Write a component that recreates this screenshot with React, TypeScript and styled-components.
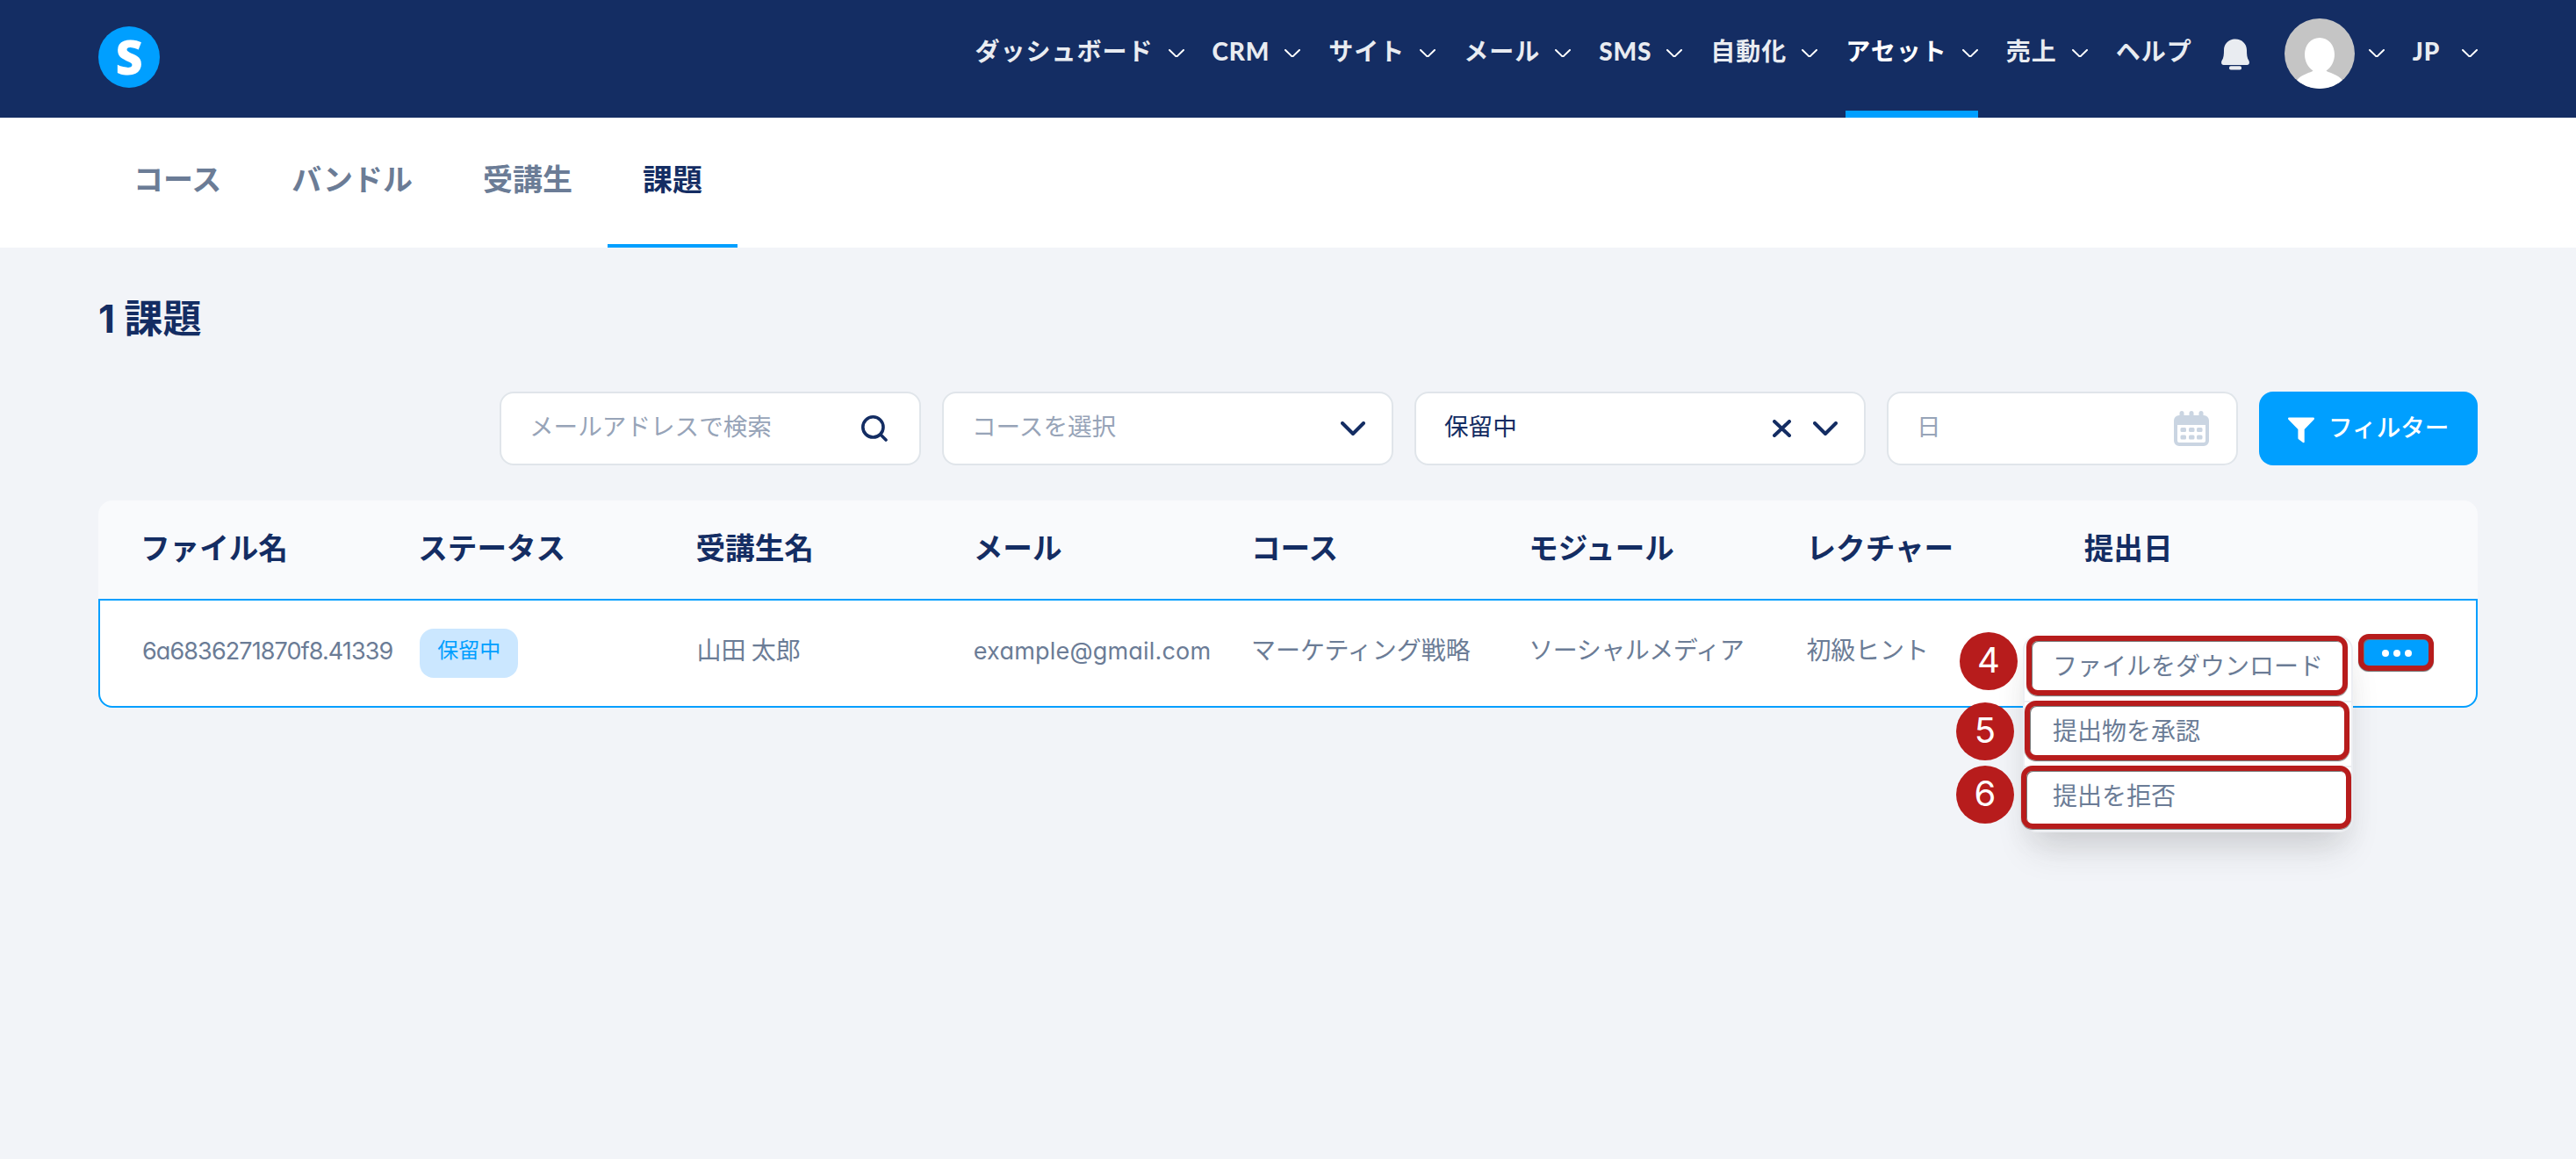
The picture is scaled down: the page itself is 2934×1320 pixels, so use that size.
import React from "react";
import styled, { createGlobalStyle, css } from "styled-components";

const NAVY = "#142d63";
const BLUE = "#009fff";
const SLATE = "#6b7c96";
const RED = "#b71c1c";
const JP = `"Noto Sans CJK JP", sans-serif`;

const GlobalStyle = createGlobalStyle`
  *, *::before, *::after { box-sizing: border-box; }
  body {
    margin: 0;
    background: #f2f4f8;
    color: ${SLATE};
    font-family: Inter, ${JP};
    font-size: 28px;
    line-height: 40px;
  }
  svg { display: block; flex: none; }
`;

const Page = styled.div`
  display: flex;
  flex-direction: column;
  min-height: 1320px;
  overflow: hidden;
`;

/* ---------- header ---------- */

const Header = styled.header`
  display: flex;
  justify-content: space-between;
  height: 134px;
  padding: 0 112px;
  background: ${NAVY};
`;

const Logo = styled.div`
  display: flex;
  align-items: center;
  justify-content: center;
  width: 70px;
  height: 70px;
  margin-top: 30px;
  padding-bottom: 3px;
  border-radius: 50%;
  background: ${BLUE};
  color: #fff;
  font: 800 54px/70px "Open Sans", sans-serif;
`;

const Nav = styled.nav`
  display: flex;
  color: #e9ecf1;
  font-family: Lato, ${JP};
  font-weight: 700;
`;

const NavItem = styled.div<{ $active?: boolean; $gap?: number }>`
  display: flex;
  align-items: flex-start;
  gap: ${(p) => p.$gap ?? 17}px;
  height: 134px;
  margin-left: 32px;
  ${(p) => p.$active && css`color: #fff; border-bottom: 8px solid ${BLUE};`}
  svg { margin-top: 56px; color: #fff; }
`;

const NavLabel = styled.span<{ $latin?: boolean }>`
  padding-top: 38px;
  font-weight: ${(p) => (p.$latin ? 900 : 700)};
  letter-spacing: ${(p) => (p.$latin ? 0.8 : 1)}px;
  white-space: nowrap;
`;

const BellWrap = styled.div`
  display: flex;
  margin: 44px 40px 0 33px;
`;

const Account = styled.div`
  display: flex;
  align-items: flex-start;
  gap: 16px;
  > svg { margin-top: 56px; color: #fff; }
`;

const AvatarFrame = styled.div`
  width: 80px;
  height: 80px;
  margin-top: 21px;
  border-radius: 50%;
  overflow: hidden;
  background: #c5c5c5;
`;

/* ---------- tabs ---------- */

const TabBar = styled.div`
  display: flex;
  height: 148px;
  padding: 0 112px;
  background: #fff;
`;

const Tab = styled.div<{ $active?: boolean }>`
  padding: 45px 40px 0;
  border-bottom: 4px solid ${(p) => (p.$active ? BLUE : "transparent")};
  color: ${(p) => (p.$active ? NAVY : SLATE)};
  font: 700 34px/48px ${JP};
`;

/* ---------- content ---------- */

const Content = styled.main`
  display: flex;
  flex-direction: column;
  padding: 0 112px;
`;

const Title = styled.h1`
  margin: 51px 0 0;
  color: ${NAVY};
  font: 700 44px/60px Inter, ${JP};
`;

const Filters = styled.div`
  display: flex;
  justify-content: flex-end;
  gap: 24px;
  margin-top: 53px;
`;

const Field = styled.div<{ $width: number; $end: number; $filled?: boolean }>`
  display: flex;
  align-items: center;
  width: ${(p) => p.$width}px;
  height: 84px;
  padding: 0 ${(p) => p.$end}px 0 32px;
  border: 2px solid #e0e5ea;
  border-radius: 16px;
  background: #fff;
  color: ${(p) => (p.$filled ? NAVY : "#97a4b8")};
`;

const FieldText = styled.span`
  flex: 1;
  padding-bottom: 9px;
  font: 400 27.6px/40px ${JP};
  white-space: nowrap;
`;

const FieldIcons = styled.div`
  display: flex;
  align-items: center;
  gap: 25px;
  color: ${NAVY};
`;

const FilterButton = styled.button`
  display: flex;
  align-items: center;
  gap: 16px;
  width: 249px;
  height: 84px;
  padding: 0 0 0 33px;
  border: 0;
  border-radius: 16px;
  background: ${BLUE};
  color: #fff;
  font: 500 27.6px/40px ${JP};
  svg { margin-top: 3px; }
  span { padding-bottom: 6px; white-space: nowrap; }
`;

/* ---------- table ---------- */

const Table = styled.section`
  display: flex;
  flex-direction: column;
  margin-top: 40px;
`;

const columns = css`
  display: grid;
  grid-template-columns: repeat(8, 316.25px) 1fr;
  align-items: center;
`;

const HeadRow = styled.div`
  ${columns}
  height: 112px;
  padding: 0 48px 6px;
  border-radius: 16px 16px 0 0;
  background: #f9fafc;
  color: ${NAVY};
  font: 700 33.6px/48px ${JP};
`;

const BodyRow = styled.div`
  ${columns}
  height: 124px;
  padding: 0 46px;
  border: 2px solid ${BLUE};
  border-radius: 0 0 16px 16px;
  background: #fff;
`;

const Cell = styled.div<{ $indent?: number; $spacing?: number }>`
  padding: 0 0 10px ${(p) => p.$indent ?? 0}px;
  white-space: nowrap;
  font-family: ${JP};
  letter-spacing: ${(p) => p.$spacing ?? 0}px;
`;

const LatinCell = styled(Cell)`
  padding-bottom: 4px;
  font: 400 27px/40px Inter, sans-serif;
  font-feature-settings: "cv11";
`;

const Status = styled.span`
  display: block;
  width: 112px;
  height: 56px;
  margin-left: 2px;
  padding-top: 3px;
  border-radius: 16px;
  background: #cbe7ff;
  color: ${BLUE};
  font: 400 24px/40px ${JP};
  text-align: center;
`;

const ActionCell = styled.div`
  position: relative;
  align-self: stretch;
`;

const MoreButton = styled.div`
  position: absolute;
  top: 38px;
  left: -4px;
  display: flex;
  align-items: center;
  justify-content: center;
  gap: 5px;
  width: 86px;
  height: 42px;
  padding: 2px 0 0 2px;
  border: 6px solid ${RED};
  border-radius: 12px;
  background: ${BLUE};
  box-shadow: 0 1px 1px #6e6e6e, inset 1px 1px 0 #6c7780;
`;

const Dot = styled.i`
  width: 8px;
  height: 8px;
  border-radius: 50%;
  background: #fff;
`;

const Menu = styled.div`
  position: absolute;
  top: 40px;
  right: 94px;
  width: 376px;
  border: 2px solid #eceef2;
  border-radius: 16px;
  background: #fff;
  box-shadow: 0 28px 40px -12px rgba(50, 50, 50, 0.17), 0 14px 30px rgba(50, 50, 50, 0.04);
`;

const MenuItem = styled.div`
  position: relative;
  height: 74px;
  padding: 11px 32px 0;
  border-bottom: 2px solid #eceef2;
  font-family: ${JP};
  white-space: nowrap;
  &:last-child { height: 72px; border-bottom: 0; }
`;

const Outline = styled.span<{ $l: number; $t: number; $w: number; $h: number }>`
  position: absolute;
  left: ${(p) => p.$l}px;
  top: ${(p) => p.$t}px;
  width: ${(p) => p.$w}px;
  height: ${(p) => p.$h}px;
  border: 6px solid ${RED};
  border-radius: 13px;
  box-shadow: 0 1px 1px #6e6e6e, inset 1px 1px 0 #777;
`;

const Step = styled.span<{ $l: number; $t: number }>`
  position: absolute;
  left: ${(p) => p.$l}px;
  top: ${(p) => p.$t}px;
  width: 66px;
  height: 66px;
  border-radius: 50%;
  background: ${RED};
  color: #fff;
  font: 400 40px/64px Inter, Arial, sans-serif;
  text-align: center;
`;

/* ---------- icons ---------- */

const NavChevron = () => (
  <svg width="18" height="10" viewBox="0 0 18 10" fill="none" stroke="currentColor" strokeWidth="2" strokeLinecap="round" strokeLinejoin="round">
    <path d="M1 1l6.6 6.4q1.4 1.2 2.8 0L17 1" />
  </svg>
);

const Chevron = () => (
  <svg width="28" height="17" viewBox="0 0 28 17" fill="none" stroke="currentColor" strokeWidth="4" strokeLinecap="round" strokeLinejoin="round">
    <path d="M2 2l12 12L26 2" />
  </svg>
);

const Cross = () => (
  <svg width="21" height="20" viewBox="0 0 21 20" fill="none" stroke="currentColor" strokeWidth="4" strokeLinecap="round">
    <path d="M2 2l17 16M19 2L2 18" />
  </svg>
);

const Search = () => (
  <svg width="30" height="30" viewBox="0 0 30 30" fill="none" stroke="currentColor" strokeWidth="3.6" strokeLinecap="round">
    <circle cx="13.4" cy="13.4" r="11.6" />
    <path d="M22 22l6 6" />
  </svg>
);

const Calendar = () => (
  <svg width="40" height="40" viewBox="0 0 40 40" fill="#cad5e2">
    <rect x="6.500" y="0" width="5" height="12" rx="2.500" />
    <rect x="17.500" y="0" width="5" height="12" rx="2.500" />
    <rect x="28.500" y="0" width="5" height="12" rx="2.500" />
    <path fillRule="evenodd" d="M6 5h28a6 6 0 0 1 6 6v23a6 6 0 0 1-6 6H6a6 6 0 0 1-6-6V11a6 6 0 0 1 6-6zM4 16v18a2 2 0 0 0 2 2h28a2 2 0 0 0 2-2V16z" />
    {[19, 27.5].map((y) => [7.5, 17, 26].map((x) => <rect key={`${x}-${y}`} x={x} y={y} width="6.500" height="5" rx="1.500" />))}
  </svg>
);

const Funnel = () => (
  <svg width="30" height="30" viewBox="0 0 30 30" fill="currentColor">
    <path d="M1.300 .5h27.400q1.300 0 1.300 1.300 0 .5-.4 1L18.700 14V28.300Q18.700 29.800 17 29.100L12 25.300Q11.400 24.800 11.400 23.800V14L.4 2.800Q0 2.400 0 1.800 0 .5 1.300 .5z" />
  </svg>
);

const Bell = () => (
  <svg width="32" height="36" viewBox="0 0 32 36" fill="#e9ecf1">
    <path d="M16 .5C8.500 .5 3 6 3 13c0 5-.2 9-2.500 12.300C-.6 27.800 .6 30 2.600 30h26.800c2 0 3.200-2.200 2.100-4.700C29.200 22 29 18 29 13 29 6 23.500 .5 16 .5z" />
    <rect x="9" y="31.200" width="14" height="4.300" rx="1.800" />
  </svg>
);

const Person = () => (
  <svg width="80" height="80" viewBox="0 0 80 80" fill="#fff">
    <path d="M40 22c10 0 17 8.500 17 19 0 8-4 15-9.500 18.500 2.500 2.500 13 3.500 18.500 11V80H14v-9.500c5.500-7.500 16-8.500 18.500-11C27 56 23 49 23 41c0-10.500 7-19 17-19z" />
  </svg>
);

/* ---------- data ---------- */

const NAV = ["ダッシュボード", "CRM", "サイト", "メール", "SMS", "自動化", "アセット", "売上"];
const TABS = ["コース", "バンドル", "受講生", "課題"];
const HEADINGS = ["ファイル名", "ステータス", "受講生名", "メール", "コース", "モジュール", "レクチャー", "提出日"];
const ACTIONS = [
  { label: "ファイルをダウンロード", step: 4, box: [2, -2, 366, 68], mark: [-74, -6] },
  { label: "提出物を承認", step: 5, box: [0, -2, 370, 68], mark: [-78, 0] },
  { label: "提出を拒否", step: 6, box: [-4, -2, 376, 72], mark: [-78, -2] },
];

const isLatin = (text: string) => /^[A-Z]+$/.test(text);

export default function App() {
  return (
    <Page>
      <GlobalStyle />
      <Header>
        <Logo>S</Logo>
        <Nav>
          {NAV.map((label) => (
            <NavItem key={label} $active={label === "アセット"}>
              <NavLabel $latin={isLatin(label)}>{label}</NavLabel>
              <NavChevron />
            </NavItem>
          ))}
          <NavItem><NavLabel>ヘルプ</NavLabel></NavItem>
          <BellWrap><Bell /></BellWrap>
          <Account>
            <AvatarFrame><Person /></AvatarFrame>
            <NavChevron />
          </Account>
          <NavItem $gap={25}>
            <NavLabel $latin>JP</NavLabel>
            <NavChevron />
          </NavItem>
        </Nav>
      </Header>

      <TabBar>
        {TABS.map((label) => <Tab key={label} $active={label === "課題"}>{label}</Tab>)}
      </TabBar>

      <Content>
        <Title>1 課題</Title>

        <Filters>
          <Field $width={480} $end={36}>
            <FieldText>メールアドレスで検索</FieldText>
            <FieldIcons><Search /></FieldIcons>
          </Field>
          <Field $width={514} $end={30}>
            <FieldText>コースを選択</FieldText>
            <FieldIcons><Chevron /></FieldIcons>
          </Field>
          <Field $width={514} $end={30} $filled>
            <FieldText>保留中</FieldText>
            <FieldIcons><Cross /><Chevron /></FieldIcons>
          </Field>
          <Field $width={400} $end={31}>
            <FieldText>日</FieldText>
            <Calendar />
          </Field>
          <FilterButton><Funnel /><span>フィルター</span></FilterButton>
        </Filters>

        <Table>
          <HeadRow>
            {HEADINGS.map((h) => <div key={h}>{h}</div>)}
          </HeadRow>
          <BodyRow>
            <LatinCell $indent={2} $spacing={-0.9}>6a6836271870f8.41339</LatinCell>
            <div><Status>保留中</Status></div>
            <Cell $indent={1}>山田 太郎</Cell>
            <LatinCell $spacing={0.2}>example@gmail.com</LatinCell>
            <Cell>マーケティング戦略</Cell>
            <Cell $spacing={-0.5}>ソーシャルメディア</Cell>
            <Cell $spacing={-0.2}>初級ヒント</Cell>
            <div />
            <ActionCell>
              <MoreButton><Dot /><Dot /><Dot /></MoreButton>
              <Menu>
                {ACTIONS.map(({ label, step, box, mark }) => (
                  <MenuItem key={step}>
                    {label}
                    <Outline $l={box[0]} $t={box[1]} $w={box[2]} $h={box[3]} />
                    <Step $l={mark[0]} $t={mark[1]}>{step}</Step>
                  </MenuItem>
                ))}
              </Menu>
            </ActionCell>
          </BodyRow>
        </Table>
      </Content>
    </Page>
  );
}
